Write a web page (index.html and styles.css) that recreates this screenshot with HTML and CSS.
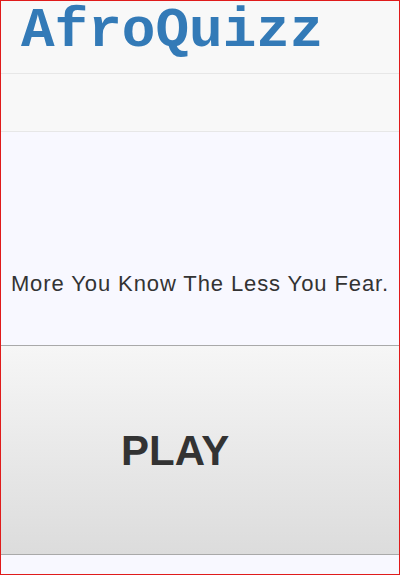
FILE: index.html
```html
<!DOCTYPE html>
<html>
<head>
<meta charset="utf-8">
<link rel="stylesheet" href="styles.css">
</head>
<body>
<div class="frame">
  <header class="navbar">
    <h1 class="brand">AfroQuizz</h1>
  </header>
  <div class="band"></div>
  <main class="hero">
    <p class="tagline">More You Know The Less You Fear.</p>
  </main>
  <button class="play">PLAY</button>
  <div class="footer"></div>
</div>
</body>
</html>
```
FILE: styles.css
```css
html, body {
  margin: 0;
  padding: 0;
}
.frame {
  box-sizing: border-box;
  width: 400px;
  height: 575px;
  border: 1px solid #e01b1b;
  display: flex;
  flex-direction: column;
  background: #f8f8ff;
  overflow: hidden;
}
.navbar {
  height: 72px;
  flex: none;
  background: #f8f8f8;
  border-bottom: 1px solid #e7e7e7;
  display: flex;
  align-items: flex-start;
}
.brand {
  margin: 0;
  padding: 2px 0 0 20px;
  font-family: "Liberation Mono", "Courier New", monospace;
  font-weight: bold;
  font-size: 56px;
  line-height: 56px;
  color: #337ab7;
}
.band {
  height: 57px;
  flex: none;
  background: #f8f8f8;
  border-bottom: 1px solid #e7e7e7;
}
.hero {
  height: 214px;
  flex: none;
  box-sizing: border-box;
  padding-top: 140px;
  background: #f8f8ff;
  border-bottom: 1px solid #a9a9a9;
}
.tagline {
  margin: 0;
  text-align: center;
  font-family: "Liberation Sans", Arial, sans-serif;
  font-size: 22px;
  letter-spacing: 0.9px;
  line-height: 24px;
  color: #333;
}
.play {
  height: 209px;
  flex: none;
  margin: 0;
  padding: 2px 0 0 120px;
  border: none;
  border-bottom: 1px solid #a9a9a9;
  background: linear-gradient(to bottom, #f6f6f6 0%, #dcdcdc 100%);
  text-align: left;
  font-family: "Liberation Sans", Arial, sans-serif;
  font-weight: bold;
  font-size: 42px;
  line-height: 48px;
  color: #333;
}
.footer {
  flex: 1;
  background: #f8f8ff;
}
```
